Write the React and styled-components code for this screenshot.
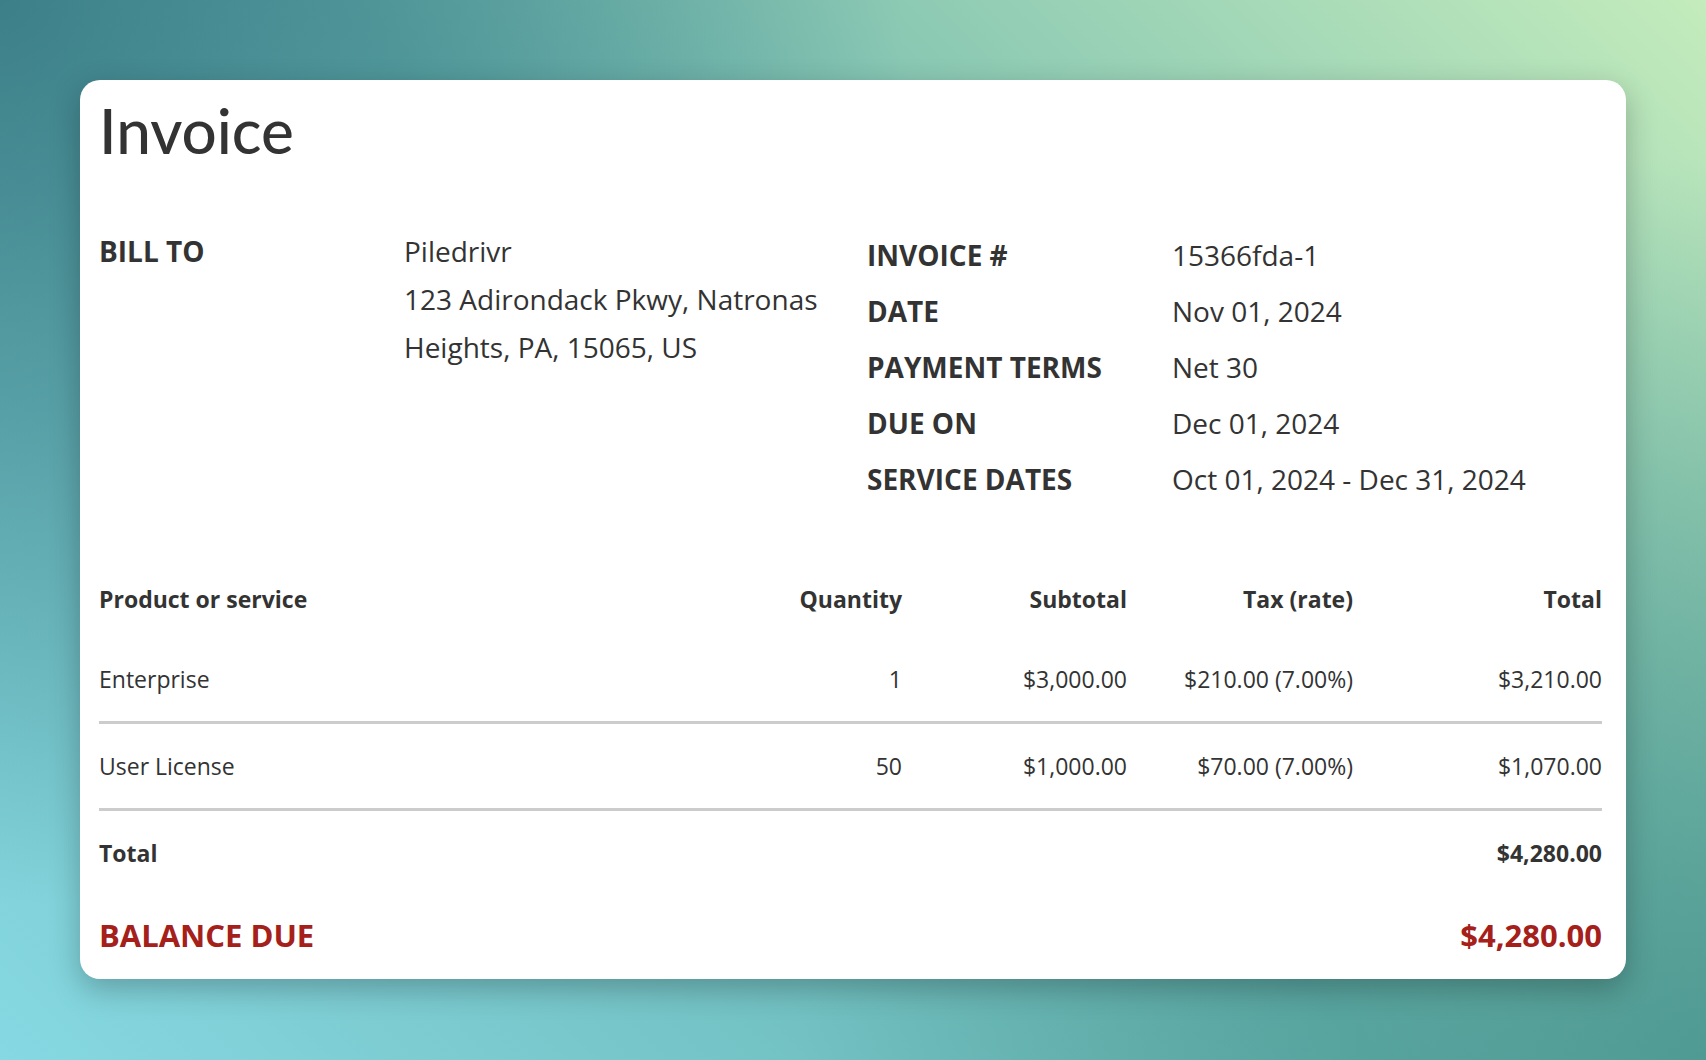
import React from "react";
import styled, { createGlobalStyle } from "styled-components";

const GlobalStyle = createGlobalStyle`
  html, body { margin: 0; padding: 0; }
  body {
    font-family: "Open Sans", "Noto Sans", sans-serif;
    color: #333;
  }
`;

const Page = styled.div`
  width: 1706px;
  height: 1060px;
  box-sizing: border-box;
  padding: 80px 80px 0 80px;
  background:
    radial-gradient(circle at 0% 0%, rgba(58, 124, 134, 0.95) 0%, rgba(58, 124, 134, 0) 45%),
    radial-gradient(circle at 100% 100%, rgba(74, 150, 144, 0.9) 0%, rgba(74, 150, 144, 0) 45%),
    linear-gradient(45deg, #86d8e2 0%, #66b2ae 50%, #c4ecbc 100%);
`;

const Card = styled.div`
  width: 1546px;
  height: 899px;
  box-sizing: border-box;
  background: #fff;
  border-radius: 20px;
  box-shadow: 0 10px 30px rgba(0, 0, 0, 0.25);
  padding: 12px 24px 0 19px;
`;

const Title = styled.h1`
  margin: 0;
  font-family: Lato, "Open Sans", sans-serif;
  font-weight: 500;
  font-size: 62px;
  line-height: 76px;
  color: #333;
`;

const Info = styled.div`
  display: grid;
  grid-template-columns: 768px 1fr;
  margin-top: 59px;
`;

const InfoGrid = styled.div`
  display: grid;
  grid-template-columns: 305px 1fr;
  grid-auto-rows: ${(p) => p.$row}px;
  align-items: center;
  font-size: 28px;
`;

const Label = styled.div`
  font-weight: 700;
  align-self: start;
  line-height: ${(p) => p.$row}px;
`;

const Value = styled.div`
  line-height: ${(p) => p.$row}px;
  align-self: start;
`;

const Table = styled.div`
  margin-top: 54px;
  font-size: 23px;
`;

const Row = styled.div`
  display: grid;
  grid-template-columns: 1fr 200px 225px 226px 249px;
  align-items: center;
  height: ${(p) => p.$h}px;
  border-bottom: ${(p) => (p.$line ? "3px solid #cccccc" : "none")};
  font-weight: ${(p) => (p.$bold ? 700 : 400)};
`;

const Cell = styled.div`
  text-align: ${(p) => (p.$left ? "left" : "right")};
`;

const Balance = styled.div`
  display: flex;
  justify-content: space-between;
  align-items: center;
  height: 80px;
  color: #a5201a;
  font-weight: 700;
  font-size: 31px;
`;

const rows = [
  ["Enterprise", "1", "$3,000.00", "$210.00 (7.00%)", "$3,210.00"],
  ["User License", "50", "$1,000.00", "$70.00 (7.00%)", "$1,070.00"],
];

const details = [
  ["INVOICE #", "15366fda-1"],
  ["DATE", "Nov 01, 2024"],
  ["PAYMENT TERMS", "Net 30"],
  ["DUE ON", "Dec 01, 2024"],
  ["SERVICE DATES", "Oct 01, 2024 - Dec 31, 2024"],
];

export default function App() {
  return (
    <>
      <GlobalStyle />
      <Page>
        <Card>
          <Title>Invoice</Title>
          <Info>
            <InfoGrid $row={48}>
              <Label $row={48}>BILL TO</Label>
              <Value $row={48}>
                Piledrivr
                <br />
                123 Adirondack Pkwy, Natronas
                <br />
                Heights, PA, 15065, US
              </Value>
            </InfoGrid>
            <InfoGrid $row={56}>
              {details.map(([k, v]) => (
                <React.Fragment key={k}>
                  <Label $row={56}>{k}</Label>
                  <Value $row={56}>{v}</Value>
                </React.Fragment>
              ))}
            </InfoGrid>
          </Info>
          <Table>
            <Row $h={76} $bold>
              <Cell $left>Product or service</Cell>
              <Cell>Quantity</Cell>
              <Cell>Subtotal</Cell>
              <Cell>Tax (rate)</Cell>
              <Cell>Total</Cell>
            </Row>
            {rows.map((r) => (
              <Row key={r[0]} $h={84} $line>
                {r.map((c, i) => (
                  <Cell key={i} $left={i === 0}>
                    {c}
                  </Cell>
                ))}
              </Row>
            ))}
            <Row $h={84} $bold>
              <Cell $left>Total</Cell>
              <Cell />
              <Cell />
              <Cell />
              <Cell>$4,280.00</Cell>
            </Row>
            <Balance>
              <span>BALANCE DUE</span>
              <span>$4,280.00</span>
            </Balance>
          </Table>
        </Card>
      </Page>
    </>
  );
}
